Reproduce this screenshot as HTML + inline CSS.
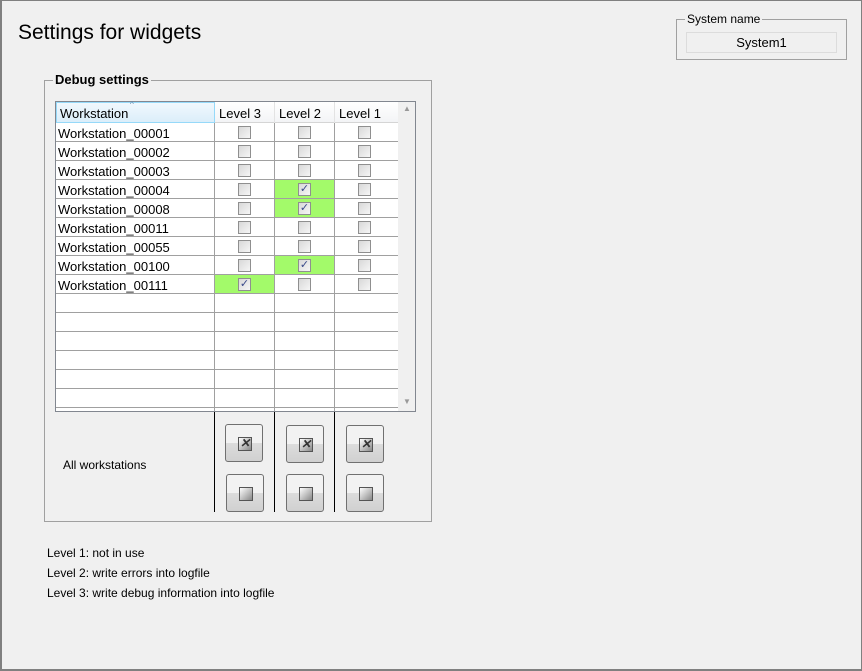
<!DOCTYPE html><html><head><style>
*{margin:0;padding:0;box-sizing:border-box}
body{width:862px;height:671px;background:#f0f0f0;font-family:"Liberation Sans",sans-serif;font-size:12px;color:#000;position:relative;overflow:hidden}
.frame{position:absolute;left:0;top:0;width:862px;height:671px;border:2px solid #808080;border-top-width:1px;border-right-width:1px}
.a{position:absolute}
.fs{position:absolute;border:1px solid #a0a0a0}
.lg{position:absolute;background:#f0f0f0;padding:0 2px;top:-8px;line-height:14px}
.cb{position:absolute;width:13px;height:13px;border:1px solid #8f8f8f;background:linear-gradient(135deg,#d8d8d8,#f6f6f6)}
.ck{font-size:11px;line-height:11px;text-align:center;color:#3a4a8a}
.btn{position:absolute;width:38px;height:38px;border:1px solid #707070;border-radius:3px;background:linear-gradient(#f2f2f2 50%,#dcdcdc 50%,#d0d0d0)}
.btn i{position:absolute;left:12px;top:12px;width:14px;height:14px;border:1px solid #555;background:linear-gradient(135deg,#fff,#888)}
.vl{position:absolute;width:1px;background:#000;top:412px;height:100px}
</style></head><body>
<div class="frame"></div>
<div class="a" style="left:18px;top:21px;font-size:21px">Settings for widgets</div>
<div class="fs" style="left:676px;top:19px;width:171px;height:41px"><span class="lg" style="left:8px">System name</span>
<div class="a" style="left:9px;top:12px;width:151px;height:21px;border:1px solid #dcdcdc;background:#f0f0f0;text-align:center;line-height:19px;font-size:13px">System1</div></div>
<div class="fs" style="left:44px;top:80px;width:388px;height:442px"><span class="lg" style="left:8px;font-weight:bold;font-size:13px">Debug settings</span></div>
<div class="a" style="left:55px;top:101px;width:361px;height:311px;border:1px solid #828790;background:#fff"></div>
<div class="a" style="left:398px;top:102px;width:17px;height:309px;background:#f0f0f0"></div>
<div class="a" style="left:403px;top:104px;font-size:8px;color:#999">▲</div>
<div class="a" style="left:403px;top:397px;font-size:8px;color:#999">▼</div>
<div class="a" style="left:56px;top:102px;width:342px;height:21px;background:linear-gradient(#fff,#f3f4f6);border-bottom:1px solid #d5d5d5"></div>
<div class="a" style="left:56px;top:102px;width:159px;height:21px;background:linear-gradient(#f1f8fd,#dbeefa);border:1px solid #96d9f9"></div>
<div class="a" style="left:60px;top:106px;font-size:13px">Workstation</div>
<div class="a" style="left:130px;top:100px;font-size:8px;color:#6a8aa8">^</div>
<div class="a" style="left:219px;top:106px;font-size:13px">Level 3</div>
<div class="a" style="left:279px;top:106px;font-size:13px">Level 2</div>
<div class="a" style="left:339px;top:106px;font-size:13px">Level 1</div>
<div class="a" style="left:274px;top:102px;width:1px;height:21px;background:#e3e3e3"></div>
<div class="a" style="left:334px;top:102px;width:1px;height:21px;background:#e3e3e3"></div>
<div id="g"></div>
<div class="vl" style="left:214px"></div><div class="vl" style="left:274px"></div><div class="vl" style="left:334px"></div>
<div class="a" style="left:63px;top:458px">All workstations</div>
<div class="btn" style="left:225px;top:424px"><i><span style="position:absolute;left:1px;top:-2px;font-size:12px;font-weight:bold;color:#333">✕</span></i></div>
<div class="btn" style="left:286px;top:425px"><i><span style="position:absolute;left:1px;top:-2px;font-size:12px;font-weight:bold;color:#333">✕</span></i></div>
<div class="btn" style="left:346px;top:425px"><i><span style="position:absolute;left:1px;top:-2px;font-size:12px;font-weight:bold;color:#333">✕</span></i></div>
<div class="btn" style="left:226px;top:474px"><i></i></div>
<div class="btn" style="left:286px;top:474px"><i></i></div>
<div class="btn" style="left:346px;top:474px"><i></i></div>
<div class="a" style="left:47px;top:546px">Level 1: not in use</div>
<div class="a" style="left:47px;top:566px">Level 2: write errors into logfile</div>
<div class="a" style="left:47px;top:586px">Level 3: write debug information into logfile</div>
<script>
var names=["00001","00002","00003","00004","00008","00011","00055","00100","00111"];
var chk={3:1,4:1,7:1};var h="";
for(var r=0;r<15;r++){var y=123+r*19;
h+='<div class="a" style="left:56px;top:'+(y+18)+'px;width:342px;height:1px;background:#a0a0a0"></div>';
if(r<9){h+='<div class="a" style="left:58px;top:'+(y+3)+'px;font-size:13px">Workstation_'+names[r]+'</div>';
var cols=[215,275,335];for(var c=0;c<3;c++){var on=(c==1&&chk[r])||(c==0&&r==8);
if(on)h+='<div class="a" style="left:'+cols[c]+'px;top:'+y+'px;width:59px;height:18px;background:#a3fa6a"></div>';
h+='<div class="cb ck" style="left:'+(cols[c]+23)+'px;top:'+(y+3)+'px">'+(on?'✓':'')+'</div>';}}}
[214,274,334].forEach(function(x){h+='<div class="a" style="left:'+x+'px;top:123px;width:1px;height:288px;background:#a0a0a0"></div>'});
document.getElementById("g").innerHTML=h;
</script>
</body></html>
